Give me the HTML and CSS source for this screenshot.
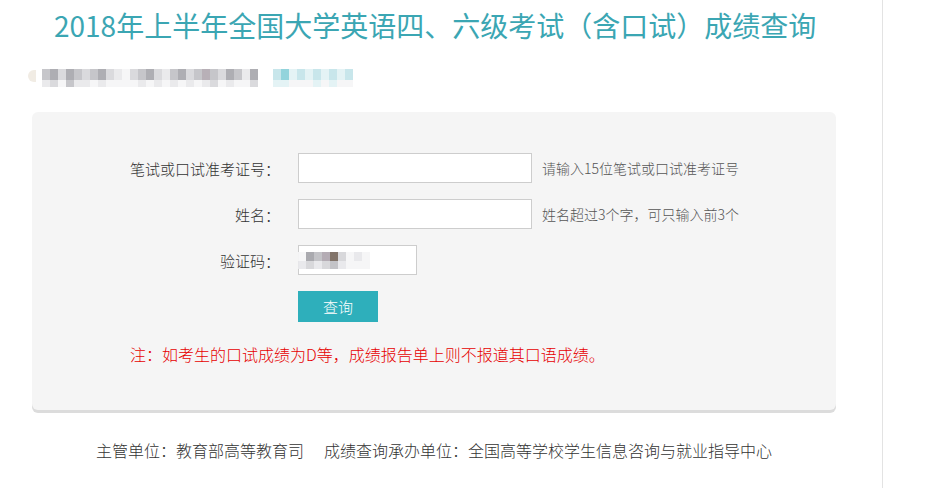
FILE: index.html
```html
<!DOCTYPE html>
<html lang="zh-CN">
<head>
<meta charset="utf-8">
<title>2018年上半年全国大学英语四、六级考试（含口试）成绩查询</title>
<link rel="stylesheet" href="styles.css">
</head>
<body>
<div class="page">
  <div class="main">
    <h1 class="title">2018年上半年全国大学英语四、六级考试（含口试）成绩查询</h1>

    <div class="sub">
      <span class="dot"></span>
      <div class="mosaic">
        <i class="b"></i><i class="d"></i>
        <i class="c"></i><i class="a"></i>
        <i class="a"></i><i class="e"></i>
        <i class="c"></i><i class="b"></i>
        <i class="b"></i><i class="d"></i>
        <i class="a"></i><i class="d"></i>
        <i class="b"></i><i class="e"></i>
        <i class="c"></i><i class="d"></i>
        <i class="a"></i><i class="e"></i>
        <i class="d"></i><i class="e"></i>
        <i class="e"></i><i class="e"></i>
        <i class="a"></i><i class="e"></i>
        <i class="b"></i><i class="d"></i>
        <i class="c"></i><i class="e"></i>
        <i class="a"></i><i class="d"></i>
        <i class="d"></i><i class="e"></i>
        <i class="b"></i><i class="d"></i>
        <i class="c"></i><i class="e"></i>
        <i class="a"></i><i class="d"></i>
        <i class="b"></i><i class="e"></i>
        <i class="f"></i><i class="d"></i>
        <i class="b"></i><i class="a"></i>
        <i class="a"></i><i class="e"></i>
        <i class="c"></i><i class="d"></i>
        <i class="b"></i><i class="e"></i>
        <i class="d"></i><i class="e"></i>
        <i class="c"></i><i class="a"></i>
      </div>
      <div class="mosaic teal">
        <i class="t"></i><i class="v"></i>
        <i class="u"></i><i class="v"></i>
        <i class="v"></i><i class="e"></i>
        <i class="t"></i><i class="e"></i>
        <i class="v"></i><i class="e"></i>
        <i class="t"></i><i class="v"></i>
        <i class="v"></i><i class="e"></i>
        <i class="t"></i><i class="v"></i>
        <i class="v"></i><i class="e"></i>
        <i class="t"></i><i class="e"></i>
      </div>
    </div>

    <div class="card">
      <form class="form">
        <div class="row">
          <label class="lbl" for="zkz">笔试或口试准考证号：</label>
          <input class="field wide" id="zkz" type="text">
          <span class="hint">请输入15位笔试或口试准考证号</span>
        </div>
        <div class="row">
          <label class="lbl" for="xm">姓名：</label>
          <input class="field wide" id="xm" type="text">
          <span class="hint">姓名超过3个字，可只输入前3个</span>
        </div>
        <div class="row">
          <label class="lbl">验证码：</label>
          <div class="field short">
            <div class="mosaic cap">
              <i class="e"></i><i class="d"></i>
              <i class="c"></i><i class="a"></i>
              <i class="b"></i><i class="d"></i>
              <i class="f"></i><i class="a"></i>
              <i class="g"></i><i class="b"></i>
              <i class="a"></i><i class="d"></i>
              <i class="e"></i><i class="e"></i>
              <i class="d"></i><i class="e"></i>
              <i class="e"></i><i class="e"></i>
            </div>
          </div>
        </div>
        <div class="row">
          <span class="lbl"></span>
          <button class="btn" type="button">查询</button>
        </div>
      </form>
      <p class="note">注：如考生的口试成绩为D等，成绩报告单上则不报道其口语成绩。</p>
    </div>

    <p class="footer"><span>主管单位：教育部高等教育司</span><span class="org">成绩查询承办单位：全国高等学校学生信息咨询与就业指导中心</span></p>
  </div>
</div>
</body>
</html>
```

FILE: styles.css
```css
html, body {
  margin: 0;
  padding: 0;
  background: #fff;
}

body {
  font-family: "Noto Sans CJK SC", "Noto Sans", sans-serif;
  font-weight: 300;
  color: #333;
}

.page {
  width: 882px;
  min-height: 488px;
  border-right: 1px solid #e3e3e3;
}

.main {
  padding-left: 32px;
  width: 804px;
}

.title {
  margin: 0;
  padding: 8px 0 0 22px;
  font-size: 28px;
  line-height: 34px;
  font-weight: 400;
  color: #3ba6b3;
  white-space: nowrap;
}

.sub {
  display: flex;
  align-items: flex-start;
  margin: 27px 0 0 -4px;
  height: 18px;
}

.dot {
  width: 8px;
  height: 12px;
  margin-top: 1px;
  margin-right: 6px;
  border-radius: 8px 0 0 8px;
  background: #f1ece4;
}

.mosaic {
  display: grid;
  grid-auto-flow: column;
  grid-template-rows: 11px 7px;
  grid-auto-columns: 8px;
  opacity: 0.9;
}

.mosaic.teal {
  margin-left: 15px;
}

.mosaic i {
  display: block;
}

.mosaic .a { background: #d6d6da; }
.mosaic .b { background: #c0c0c5; }
.mosaic .c { background: #a6a6ab; }
.mosaic .d { background: #e8e8eb; }
.mosaic .e { background: #f6f6f7; }
.mosaic .f { background: #b1a8b0; }
.mosaic .g { background: #7b6c62; }
.mosaic .t { background: #c3e4e9; }
.mosaic .u { background: #88d0d9; }
.mosaic .v { background: #e2f2f4; }

.card {
  margin-top: 25px;
  background: #f5f5f5;
  border-radius: 6px;
  box-shadow: 0 3px 0 #dcdcdc;
  padding: 41px 0 45px 0;
}

.form {
  margin: 0;
}

.row {
  display: flex;
  align-items: center;
  margin-bottom: 16px;
}

.row:last-child {
  margin-bottom: 0;
}

.lbl {
  width: 248px;
  margin-right: 18px;
  text-align: right;
  font-size: 15px;
  color: #333;
  white-space: nowrap;
}

.field {
  box-sizing: border-box;
  height: 30px;
  margin: 0;
  padding: 0;
  border: 1px solid #cdcdcd;
  background: #fff;
  font-family: inherit;
  font-size: 14px;
  outline: none;
}

.field.wide {
  width: 234px;
}

.field.short {
  width: 119px;
  display: flex;
  align-items: center;
}

.mosaic.cap {
  grid-template-rows: 9px 8px;
  grid-auto-columns: 8px;
  margin-left: -1px;
  opacity: 0.95;
}

.hint {
  margin-left: 10px;
  font-size: 14px;
  color: #555;
  white-space: nowrap;
}

.btn {
  width: 80px;
  height: 31px;
  margin: 0;
  padding: 0;
  border: none;
  background: #2eafbb;
  color: #fff;
  font-family: inherit;
  font-weight: 300;
  font-size: 15px;
  cursor: pointer;
}

.note {
  margin: 21px 0 0 98px;
  font-size: 16px;
  line-height: 22px;
  color: #e60000;
  white-space: nowrap;
}

.footer {
  margin: 28px 0 0 0;
  text-align: center;
  font-size: 16px;
  line-height: 24px;
  color: #333;
  white-space: nowrap;
}

.footer .org {
  margin-left: 20px;
}
```
